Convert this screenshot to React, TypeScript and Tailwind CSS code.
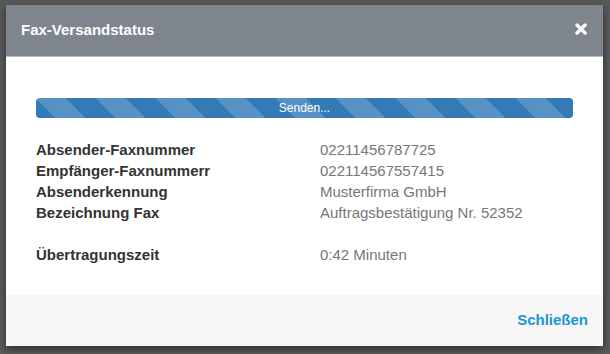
import React from "react";

const rows: [string, string][] = [
  ["Absender-Faxnummer", "02211456787725"],
  ["Empfänger-Faxnummerr", "022114567557415"],
  ["Absenderkennung", "Musterfirma GmbH"],
  ["Bezeichnung Fax", "Auftragsbestätigung Nr. 52352"],
];

export default function App() {
  return (
    <div
      className="w-[610px] h-[354px] bg-[#5a5a5a] pt-[5px] pl-[6px] overflow-hidden"
      style={{ fontFamily: '"Liberation Sans", Arial, sans-serif' }}
    >
      <div className="w-[597px] h-[341px] flex flex-col bg-white shadow-[0_3px_8px_rgba(0,0,0,0.5)]">
        <div className="h-[52px] bg-[#7e858c] border-b border-[#b9bdc1] flex items-center justify-between pl-[15px] pr-[16px]">
          <span className="text-white font-bold text-[15px]">Fax-Versandstatus</span>
          <svg width="12" height="12" viewBox="0 0 12 12" className="mt-[-4px]">
            <path d="M2 2 L10 10 M10 2 L2 10" stroke="white" strokeWidth="3.4" strokeLinecap="round" />
          </svg>
        </div>
        <div className="flex-1 bg-white px-[30px] pt-[41px]">
          <div
            className="h-[20px] rounded-[4px] flex items-center justify-center text-white text-[12px]"
            style={{
              backgroundColor: "#337ab7",
              backgroundImage:
                "linear-gradient(45deg, rgba(255,255,255,0.18) 25%, transparent 25%, transparent 50%, rgba(255,255,255,0.18) 50%, rgba(255,255,255,0.18) 75%, transparent 75%, transparent)",
              backgroundSize: "60px 60px",
            }}
          >
            Senden...
          </div>
          <div className="mt-[21px] text-[15px] leading-[21px]">
            {rows.map(([k, v]) => (
              <div key={k} className="flex">
                <span className="w-[284px] font-bold text-[#333]">{k}</span>
                <span className="text-[#777]">{v}</span>
              </div>
            ))}
            <div className="flex mt-[21px]">
              <span className="w-[284px] font-bold text-[#333]">Übertragungszeit</span>
              <span className="text-[#777]">0:42 Minuten</span>
            </div>
          </div>
        </div>
        <div className="h-[51px] bg-[#f7f7f7] flex items-center justify-end pr-[15px]">
          <span className="text-[#1a96d5] font-bold text-[15px]">Schließen</span>
        </div>
      </div>
    </div>
  );
}
